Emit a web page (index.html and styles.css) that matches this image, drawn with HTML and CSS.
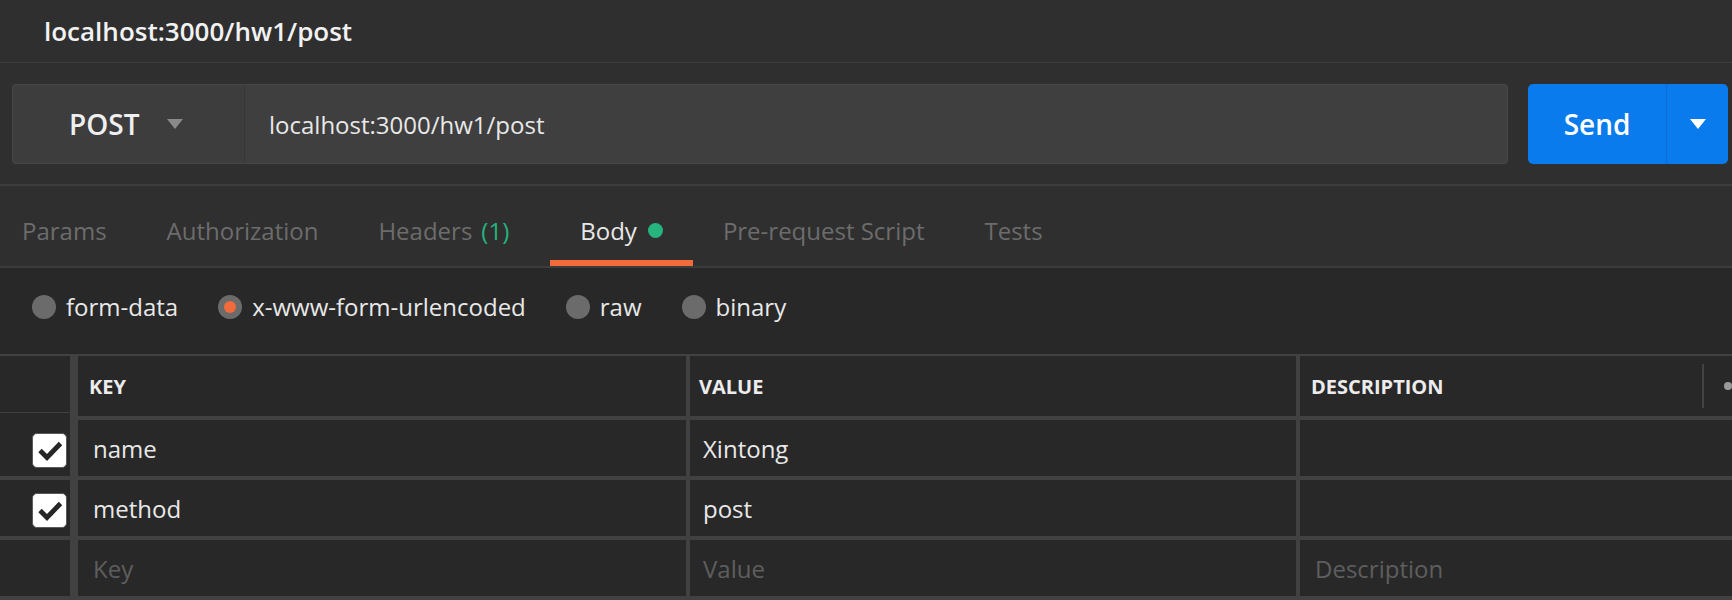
FILE: index.html
```html
<!DOCTYPE html>
<html lang="en">
<head>
<meta charset="utf-8">
<title>localhost:3000/hw1/post</title>
<link rel="stylesheet" href="styles.css">
</head>
<body>
<div class="app">
  <header class="title-bar"><span class="title">localhost:3000/hw1/post</span></header>

  <section class="request">
    <div class="url-box">
      <div class="method">
        <span class="method-name">POST</span>
        <svg class="caret" viewBox="0 0 16 10" width="16" height="10"><path d="M0 0H16L8 10Z" fill="#8a8a8a"/></svg>
      </div>
      <div class="url">localhost:3000/hw1/post</div>
    </div>
    <div class="send">
      <span class="send-label">Send</span>
      <span class="send-caret"><svg viewBox="0 0 16 10" width="16" height="10"><path d="M0 0H16L8 10Z" fill="#ffffff"/></svg></span>
    </div>
  </section>

  <nav class="tabs">
    <div class="tab">Params</div>
    <div class="tab">Authorization</div>
    <div class="tab">Headers<span class="count">(1)</span></div>
    <div class="tab active">Body<span class="dot"></span></div>
    <div class="tab">Pre-request Script</div>
    <div class="tab">Tests</div>
  </nav>

  <main class="pane">
    <div class="radios">
      <label class="radio"><span class="radio-dot"></span>form-data</label>
      <label class="radio"><span class="radio-dot checked"><span class="radio-inner"></span></span>x-www-form-urlencoded</label>
      <label class="radio"><span class="radio-dot"></span>raw</label>
      <label class="radio"><span class="radio-dot"></span>binary</label>
    </div>

    <div class="kv">
      <div class="cell check head-check"></div>
      <div class="cell head">KEY</div>
      <div class="cell head c3">VALUE</div>
      <div class="cell head">DESCRIPTION<span class="col-resize"></span><span class="more-dot"></span></div>

      <div class="cell check"><span class="checkbox"><svg viewBox="0 0 32 32" width="32" height="32"><path d="M6 16.5L13 23.5L26.5 9.5" fill="none" stroke="#262626" stroke-width="4.8"/></svg></span></div>
      <div class="cell">name</div>
      <div class="cell c3">Xintong</div>
      <div class="cell"></div>

      <div class="cell check"><span class="checkbox"><svg viewBox="0 0 32 32" width="32" height="32"><path d="M6 16.5L13 23.5L26.5 9.5" fill="none" stroke="#262626" stroke-width="4.8"/></svg></span></div>
      <div class="cell">method</div>
      <div class="cell c3">post</div>
      <div class="cell"></div>

      <div class="cell check"></div>
      <div class="cell placeholder">Key</div>
      <div class="cell c3 placeholder">Value</div>
      <div class="cell placeholder">Description</div>
    </div>
  </main>
</div>
</body>
</html>
```

FILE: styles.css
```css
html, body {
  margin: 0;
  padding: 0;
}

body {
  background: #282828;
  font-family: "Open Sans", "Noto Sans", sans-serif;
  color: #e8e8e8;
  width: 1732px;
  height: 600px;
  overflow: hidden;
}

.title-bar {
  height: 62px;
  border-bottom: 1px solid #3c3c3c;
  display: flex;
  align-items: center;
  padding-left: 44px;
  background: #2f2f2f;
  font-size: 26px;
  font-weight: 600;
  color: #f2f2f2;
}

.request {
  display: flex;
  gap: 20px;
  padding: 21px 4px 20px 12px;
  background: #2f2f2f;
  border-bottom: 2px solid #3c3c3c;
}

.url-box {
  flex: 1;
  display: flex;
  height: 80px;
  box-sizing: border-box;
  border: 1px solid #464646;
  border-radius: 3px;
  background: #3f3f3f;
  overflow: hidden;
}

.method {
  width: 232px;
  box-sizing: border-box;
  padding-left: 56px;
  display: flex;
  align-items: center;
  border-right: 1px solid #363636;
  background: #3d3d3d;
  font-size: 28px;
  font-weight: 600;
  color: #efefef;
}

.caret {
  margin-left: 28px;
}

.url {
  padding-left: 24px;
  display: flex;
  align-items: center;
  font-size: 24px;
  color: #e8e8e8;
}

.send {
  width: 200px;
  height: 80px;
  background: #097bed;
  border-radius: 5px;
  display: flex;
}

.send-label {
  width: 138px;
  display: flex;
  align-items: center;
  justify-content: center;
  font-size: 28px;
  font-weight: 600;
  color: #ffffff;
  border-right: 1px solid #0a6ed6;
}

.send-caret {
  flex: 1;
  display: flex;
  align-items: center;
  justify-content: center;
}

.tabs {
  display: flex;
  height: 80px;
  padding-left: 22px;
  background: #2f2f2f;
  border-bottom: 2px solid #3c3c3c;
}

.tab {
  box-sizing: border-box;
  height: 80px;
  padding: 15px 30px 0;
  border-bottom: 6px solid transparent;
  display: flex;
  align-items: center;
  font-size: 24px;
  color: #6c6c6c;
  white-space: nowrap;
}

.tab:first-child {
  padding-left: 0;
}

.tab.active {
  color: #e8e8e8;
  border-bottom-color: #f26b3a;
}

.count {
  color: #26b27f;
  margin-left: 9px;
  margin-right: 11px;
}

.dot {
  width: 15px;
  height: 15px;
  border-radius: 50%;
  background: #26b47f;
  margin-left: 11px;
}

.pane {
  background: #282828;
}

.radios {
  display: flex;
  box-sizing: border-box;
  height: 86px;
  padding: 0 0 9px 32px;
  align-items: center;
  gap: 40px;
}

.radio {
  display: flex;
  align-items: center;
  font-size: 24px;
  color: #e8e8e8;
}

.radio-dot {
  width: 24px;
  height: 24px;
  border-radius: 50%;
  background: #6b6b6b;
  margin-right: 10px;
  display: flex;
  align-items: center;
  justify-content: center;
}

.radio-inner {
  width: 12px;
  height: 12px;
  border-radius: 50%;
  background: #f26b3a;
}

.kv {
  display: grid;
  grid-template-columns: 74px 608px 606px 1fr;
  grid-template-rows: 60px 56px 56px 56px;
  gap: 4px;
  background: #414141;
  border-top: 2px solid #414141;
  padding-bottom: 4px;
}

.cell {
  background: #282828;
  display: flex;
  align-items: center;
  padding-left: 15px;
  font-size: 24px;
  color: #e8e8e8;
  white-space: nowrap;
  overflow: hidden;
}

.cell.c3 {
  padding-left: 13px;
}

.cell.head {
  padding-left: 11px;
  font-size: 20px;
  font-weight: 700;
  color: #ececec;
}

.cell.head.c3 {
  padding-left: 9px;
}

.cell.check {
  box-sizing: border-box;
  border-right: 4px solid #414141;
  justify-content: flex-end;
  padding-left: 0;
  padding-right: 3px;
}

.cell.head-check {
  margin-bottom: -4px;
  background: linear-gradient(to bottom, #282828 56px, #414141 56px, #414141 57px, #282828 57px);
}

.placeholder {
  color: #5e5e5e;
}

.checkbox {
  width: 35px;
  height: 35px;
  box-sizing: border-box;
  margin-top: 4px;
  border: 1px solid #5a5a5a;
  border-radius: 5px;
  background: #ffffff;
  display: flex;
  align-items: center;
  justify-content: center;
}

.col-resize {
  width: 2px;
  height: 44px;
  background: #444444;
  margin-left: auto;
}

.more-dot {
  width: 8px;
  height: 8px;
  border-radius: 50%;
  background: #9a9a9a;
  margin-left: 20px;
}
```
